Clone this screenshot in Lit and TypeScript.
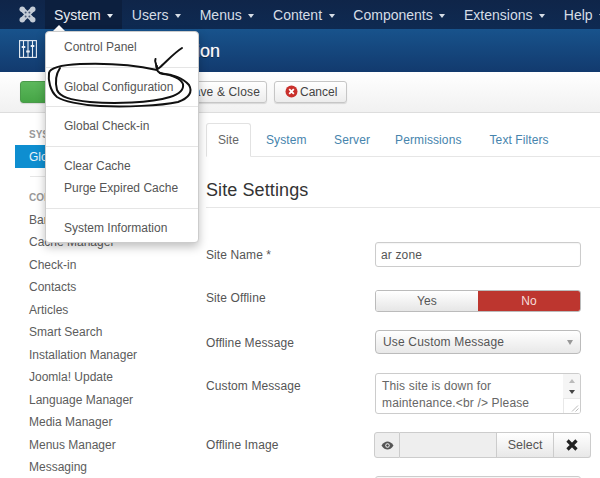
import { LitElement, html, css, svg } from "lit";
import { customElement } from "lit/decorators.js";

@customElement("app-root")
export class AppRoot extends LitElement {
  static styles = css`
    :host { display: block; position: relative; width: 600px; height: 478px; overflow: hidden; background: #fff; font-family: "Liberation Sans", Arial, sans-serif; color: #555; font-size: 12px; }
    * { box-sizing: border-box; }
    .nav { height: 29px; background: linear-gradient(#0f2549, #0e2a52); display: flex; align-items: center; color: #d6dde6; font-size: 14px; position: relative; overflow: hidden; }
    .logo { width: 44.5px; flex: none; display: flex; justify-content: flex-end; padding-right: 9px; }
    .nav-item { display: flex; flex: none; align-items: center; height: 29px; padding: 0 9.4px; gap: 6.5px; white-space: nowrap; }
    .nav-item.open { background: #0c1f3e; color: #e8edf2; }
    .caret { width: 0; height: 0; border-left: 3.5px solid transparent; border-right: 3.5px solid transparent; border-top: 4px solid currentColor; margin-top: 2px; }
    .header { height: 43px; background: linear-gradient(#18538c, #123a6e); display: flex; align-items: center; padding-left: 19px; color: #fff; gap: 10px; }
    .header svg { margin-bottom: 4px; }
    .title { font-size: 18px; font-weight: 400; margin-left: 9px; color: #fff; text-shadow: 0 1px 0 rgba(0,0,0,.5), 0 0 1px rgba(255,255,255,.6); padding-top: 2px; }
    .toolbar { height: 41px; background: linear-gradient(#fff, #f1f1f1); border-bottom: 1px solid #ddd; display: flex; align-items: center; padding: 0 0 1px 20px; gap: 6px; }
    .btn { height: 22px; border: 1px solid #c6c6c6; border-radius: 3px; background: linear-gradient(#fff, #ececec); box-shadow: 0 1px 1px rgba(0,0,0,.12); display: flex; align-items: center; color: #444; white-space: nowrap; }
    .btn.green { width: 130px; background: linear-gradient(#5cb85c, #46a546); border-color: #4a9a4a; }
    .btn.save { width: 111px; justify-content: flex-end; padding-right: 6px; letter-spacing: .15px; }
    .btn.cancel { width: 73px; margin-left: 1px; padding-left: 10px; gap: 2px; }
    .main { display: flex; }
    .side { width: 206px; flex: none; padding: 12px 15px 0 29px; }
    .side-head { font-size: 10px; font-weight: 700; color: #999; height: 19px; display: flex; align-items: center; }
    .side-active { margin-left: -14px; height: 23px; background: #0e8ed0; color: #eaf5fb; display: flex; align-items: center; padding-left: 14px; width: 130px; white-space: nowrap; margin-top: 1px; }
    .side-rule { height: 1px; background: #e6e6e6; margin: 8px 0 11px 1px; }
    .side-link { height: 22.5px; line-height: 22.5px; color: #5c5c5c; white-space: nowrap; }
    .side-head + .side-link { margin-top: 1.5px; }
    .content { flex: 1; padding-top: 10px; min-width: 0; }
    .tabs { display: flex; height: 34px; border-bottom: 1px solid #e6e6e6; letter-spacing: .1px; }
    .tab { line-height: 34px; color: #4684ad; white-space: nowrap; }
    .tab.on { color: #666; border: 1px solid #e2e2e2; border-bottom: 1px solid #fff; border-radius: 3px 3px 0 0; height: 34px; background: #fff; width: 45px; text-align: center; line-height: 32px; }
    .t1 { margin-left: 15px; }
    .t2 { margin-left: 27.5px; }
    .t3 { margin-left: 25px; }
    .t4 { margin-left: 28px; }
    h2 { margin: 0; font-size: 18px; letter-spacing: .1px; font-weight: 400; color: #333; height: 51px; line-height: 22px; padding-top: 22px; border-bottom: 1px solid #e6e6e6; }
    .form { display: flex; flex-direction: column; }
    .row { display: grid; grid-template-columns: 169px 206px; position: relative; }
    .lbl { color: #555; align-self: center; letter-spacing: .1px; }
    .r1 { margin-top: 34px; }
    .r2 { margin-top: 23px; }
    .r3 { margin-top: 18px; }
    .r4 { margin-top: 19px; }
    .r5 { margin-top: 18px; }
    .r6 { margin-top: 18px; }
    .up3 { transform: translateY(-3px); }
    .down1 { transform: translateY(1px); }
    .top { align-self: start; margin-top: 6px; }
    .field { height: 25px; border: 1px solid #ccc; border-radius: 3px; background: #fff; padding: 0 5px; line-height: 25px; color: #555; box-shadow: inset 0 1px 1px rgba(0,0,0,.04); letter-spacing: .15px; }
    .toggle { display: flex; height: 22px; border: 1px solid #bbb; border-radius: 3px; overflow: hidden; letter-spacing: .15px; }
    .toggle span { flex: 1; display: flex; align-items: center; justify-content: center; }
    .yes { background: linear-gradient(#fff, #e6e6e6); color: #555; }
    .no { background: #bd362f; color: #f6dcdb; }
    .select { height: 24px; border: 1px solid #bbb; border-radius: 4px; background: linear-gradient(#fff, #e8e8e8); display: flex; align-items: center; justify-content: space-between; padding: 0 7px; color: #555; letter-spacing: .17px; }
    .select i { border-left: 3.5px solid transparent; border-right: 3.5px solid transparent; border-top: 5px solid #999; }
    .textarea { height: 41px; border: 1px solid #ccc; border-radius: 3px; position: relative; padding: 4px 6px; line-height: 17px; color: #666; white-space: nowrap; overflow: hidden; letter-spacing: .15px; }
    .scroll { position: absolute; right: 0; top: 0; bottom: 0; width: 17px; background: #f5f5f5; display: flex; flex-direction: column; align-items: center; padding-top: 5px; gap: 7px; }
    .scroll .u { border-left: 3.5px solid transparent; border-right: 3.5px solid transparent; border-bottom: 4px solid #bbb; }
    .scroll .d { border-left: 3.5px solid transparent; border-right: 3.5px solid transparent; border-top: 4px solid #444; }
    .grip { position: absolute; right: 0; bottom: 0; width: 17px; height: 15px; background: #fff; border-left: 1px solid #e8e8e8; border-top: 1px solid #e8e8e8; }
    .media { display: flex; height: 26px; width: 217px; margin-left: -1px; border-radius: 3px; }
    .media > * { display: flex; align-items: center; justify-content: center; border: 1px solid #ccc; }
    .eye { width: 26px; background: #eee; border-radius: 3px 0 0 3px; }
    .mid { width: 97px; background: #eee; border-left: 0 !important; }
    .sel { width: 57px; background: linear-gradient(#fff, #e8e8e8); border-left: 0 !important; color: #555; font-size: 12.5px; }
    .x { width: 37px; background: linear-gradient(#fff, #e8e8e8); border-left: 0 !important; border-radius: 0 3px 3px 0; }
    .menu { position: absolute; left: 45px; top: 31px; width: 154px; height: 212px; background: #fff; border: 1px solid #ccc; border-radius: 4px; box-shadow: 0 4px 10px rgba(0,0,0,.25); padding-top: 4px; color: #555; }
    .menu .mi { height: 22.5px; line-height: 22.5px; padding-left: 18px; white-space: nowrap; }
    .menu .div { height: 1px; background: #e5e5e5; margin: 8px 0; }
    .notch { position: absolute; left: 53px; top: 25px; border-left: 6px solid transparent; border-right: 6px solid transparent; border-bottom: 6px solid #fff; }
    .ink { position: absolute; left: 0; top: 0; pointer-events: none; }
    .icon { display: block; }
  `;

  render() {
    const links = ["Banners","Cache Manager","Check-in","Contacts","Articles","Smart Search","Installation Manager","Joomla! Update","Language Manager","Media Manager","Menus Manager","Messaging"];
    const navs = ["Users","Menus","Content","Components","Extensions","Help"];
    return html`
      <div class="nav">
        <div class="logo">
          <svg class="icon" width="17" height="17" viewBox="0 0 17 17"><g fill="none" stroke="#c4ccd6" stroke-width="5" stroke-linecap="round"><path d="M3.8 3.8L13.2 13.2M13.2 3.8L3.8 13.2"/></g><g fill="#c4ccd6"><circle cx="3.2" cy="3.2" r="2.7"/><circle cx="13.8" cy="3.2" r="2.7"/><circle cx="3.2" cy="13.8" r="2.7"/><circle cx="13.8" cy="13.8" r="2.7"/></g><g fill="#4a5b76"><circle cx="6.6" cy="6.6" r="1"/><circle cx="10.4" cy="6.6" r="1"/><circle cx="6.6" cy="10.4" r="1"/><circle cx="10.4" cy="10.4" r="1"/></g></svg>
        </div>
        <div class="nav-item open">System <span class="caret"></span></div>
        ${navs.map(n => html`<div class="nav-item">${n} <span class="caret"></span></div>`)}
      </div>
      <div class="header">
        <svg class="icon" width="18" height="18" viewBox="0 0 18 18" fill="none" stroke="#e8eef4" stroke-width="1.1"><rect x=".6" y=".6" width="16.8" height="16.8"/><path d="M4.5 1v16M9 1v16M13.5 1v16"/><path d="M2.7 7h3.6M7.2 11.5h3.6M11.7 6h3.6" stroke-width="1.8"/></svg>
        <div class="title">Global Configuration</div>
      </div>
      <div class="toolbar">
        <div class="btn green"></div>
        <div class="btn save">Save &amp; Close</div>
        <div class="btn cancel">
          <svg width="13" height="13" viewBox="0 0 13 13"><circle cx="6.5" cy="6.5" r="6" fill="#c9302c"/><path d="M4.2 4.2l4.6 4.6M8.8 4.2l-4.6 4.6" stroke="#fff" stroke-width="1.8"/></svg>
          Cancel
        </div>
      </div>
      <div class="main">
        <div class="side">
          <div class="side-head">SYSTEM</div>
          <div class="side-active">Global Configuration</div>
          <div class="side-rule"></div>
          <div class="side-head">COMPONENT</div>
          ${links.map(l => html`<div class="side-link">${l}</div>`)}
        </div>
        <div class="content">
          <div class="tabs">
            <div class="tab on">Site</div>
            <div class="tab t1">System</div>
            <div class="tab t2">Server</div>
            <div class="tab t3">Permissions</div>
            <div class="tab t4">Text Filters</div>
          </div>
          <h2>Site Settings</h2>
          <div class="form">
            <div class="row r1"><div class="lbl">Site Name *</div><div class="field">ar zone</div></div>
            <div class="row r2"><div class="lbl up3">Site Offline</div><div class="toggle"><span class="yes">Yes</span><span class="no">No</span></div></div>
            <div class="row r3"><div class="lbl down1">Offline Message</div><div class="select">Use Custom Message <i></i></div></div>
            <div class="row r4"><div class="lbl top">Custom Message</div><div class="textarea">This site is down for<br>maintenance.&lt;br /&gt; Please<div class="scroll"><i class="u"></i><i class="d"></i></div><div class="grip"><svg class="icon" width="16" height="14" viewBox="0 0 16 14" fill="none" stroke="#aaa" stroke-width=".8"><path d="M8 12.5L14 6.5M11.5 12.5L14.5 9.5"/></svg></div></div></div>
            <div class="row r5"><div class="lbl">Offline Image</div><div class="media">
              <div class="eye"><svg width="13" height="9" viewBox="0 0 13 9"><path d="M.5 4.5C2.5 1.5 4.5.5 6.5.5s4 1 6 4c-2 3-4 4-6 4s-4-1-6-4z" fill="#555"/><circle cx="6.5" cy="4.5" r="2.2" fill="#eee"/><circle cx="6.5" cy="4.5" r="1.2" fill="#444"/></svg></div>
              <div class="mid"></div><div class="sel">Select</div><div class="x"><svg width="12" height="12" viewBox="0 0 12 12" fill="none" stroke="#222" stroke-width="3.2"><path d="M1.5 1.5L10.5 10.5M10.5 1.5L1.5 10.5"/></svg></div>
            </div></div>
            <div class="row r6"><div></div><div class="field"></div></div>
          </div>
        </div>
      </div>
      <div class="notch"></div>
      <div class="menu">
        <div class="mi">Control Panel</div>
        <div class="div"></div>
        <div class="mi">Global Configuration</div>
        <div class="div"></div>
        <div class="mi">Global Check-in</div>
        <div class="div"></div>
        <div class="mi">Clear Cache</div>
        <div class="mi">Purge Expired Cache</div>
        <div class="div"></div>
        <div class="mi">System Information</div>
      </div>
      <svg class="ink" width="600" height="478" viewBox="0 0 600 478" fill="none" stroke="#111" stroke-width="2" stroke-linecap="round" stroke-linejoin="round">
        ${svg`<path d="M182 48C174 53 166 62 159 68C157 70 156 67 156 64C155 62 155 60 155.5 59"/>
        <path d="M157 66C156 70 158 73 163 74C172 74 183 78 189 85C193 92 189 98 178 102C160 106 125 107 100 106C80 105 63 101 57 97C50 91 48 80 49 73C50 68 60 65 80 64C105 63 135 65 157 70"/>
        <path d="M60 68C56 74 55 82 57 90C60 97 70 100 90 102C115 104 150 103 170 97C180 94 184 90 183 84C181 79 172 75 160 73"/>`}
      </svg>
    `;
  }
}
